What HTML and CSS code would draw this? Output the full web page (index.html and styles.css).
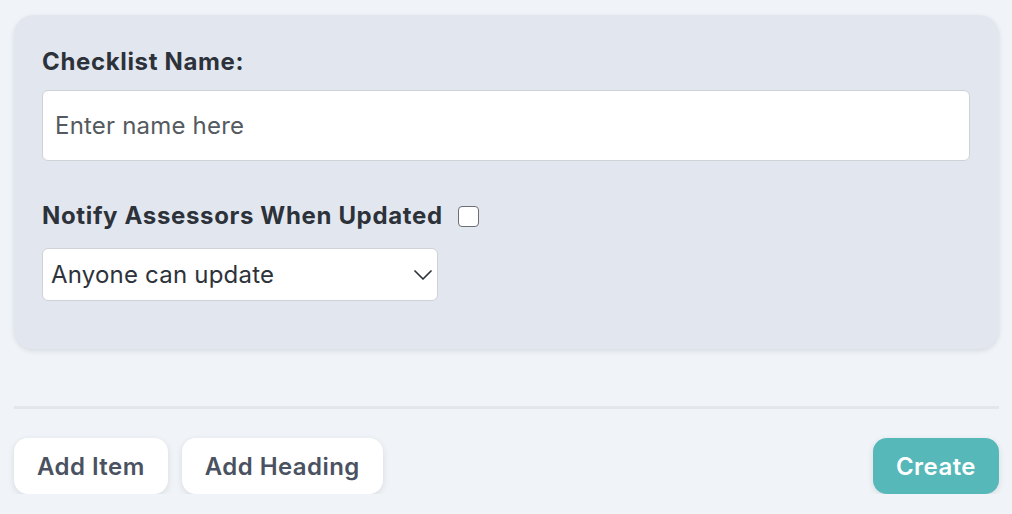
FILE: index.html
```html
<!DOCTYPE html>
<html lang="en">
<head>
<meta charset="utf-8">
<title>Create Checklist</title>
<link rel="stylesheet" href="styles.css">
</head>
<body>
<main class="page">
  <section class="panel">
    <label class="field-label" for="name">Checklist Name:</label>
    <input id="name" class="text-input" type="text" placeholder="Enter name here">
    <div class="notify-row">
      <label class="field-label" for="notify">Notify Assessors When Updated</label>
      <input id="notify" class="checkbox" type="checkbox">
    </div>
    <div class="select-wrap">
      <select class="select">
        <option>Anyone can update</option>
      </select>
      <svg class="chevron" width="18" height="10" viewBox="0 0 18 10" aria-hidden="true"><path d="M1 1l8 8 8-8" fill="none" stroke="#2d333b" stroke-width="1.7" stroke-linecap="round" stroke-linejoin="round"/></svg>
    </div>
  </section>
  <hr class="divider">
  <div class="actions">
    <div class="actions-left">
      <button class="btn">Add Item</button>
      <button class="btn">Add Heading</button>
    </div>
    <button class="btn btn-primary">Create</button>
  </div>
</main>
</body>
</html>
```

FILE: styles.css
```css
* { box-sizing: border-box; }
html, body { margin: 0; padding: 0; }
body {
  background: #f0f4f8;
  font-family: Inter, "Noto Sans", "Liberation Sans", sans-serif;
  color: #2d333b;
}
.page {
  padding: 15px 13px 0 14px;
  display: flex;
  flex-direction: column;
}
.panel {
  background: #e2e7ef;
  border-radius: 20px;
  padding: 29px 29px 48px 28px;
  display: flex;
  flex-direction: column;
  align-items: flex-start;
  box-shadow: 0 2px 5px rgba(30, 40, 60, 0.12);
}
.field-label {
  font-size: 24px;
  line-height: 36px;
  font-weight: 700;
  letter-spacing: 0.65px;
  color: #2d323a;
}
.text-input {
  margin-top: 10px;
  width: 100%;
  height: 71px;
  border: 1px solid #cfd2d6;
  border-radius: 6px;
  background: #fff;
  padding: 0 12px;
  font-family: inherit;
  font-size: 24px;
  letter-spacing: 0.2px;
  color: #2d333b;
  outline: none;
}
.text-input::placeholder { color: #555a60; }
.notify-row {
  margin-top: 37px;
  display: flex;
  align-items: center;
  gap: 15px;
}
.checkbox {
  appearance: none;
  -webkit-appearance: none;
  margin: 0;
  width: 21px;
  height: 21px;
  border: 1.5px solid #6b6f75;
  border-radius: 4px;
  background: #fff;
}
.select-wrap {
  position: relative;
  margin-top: 14px;
  width: 396px;
}
.select {
  appearance: none;
  -webkit-appearance: none;
  width: 100%;
  height: 53px;
  border: 1px solid #cfd2d6;
  border-radius: 6px;
  background: #fff;
  padding: 0 40px 0 8px;
  font-family: inherit;
  font-size: 24px;
  letter-spacing: 0.2px;
  color: #2d333b;
}
.chevron {
  position: absolute;
  right: 6px;
  top: 22px;
  pointer-events: none;
}
.divider {
  margin: 57px 0 0;
  border: 0;
  height: 3px;
  background: #e3e7ec;
}
.actions {
  margin-top: 29px;
  display: flex;
  justify-content: space-between;
  align-items: center;
}
.actions-left {
  display: flex;
  gap: 14px;
}
.btn {
  height: 56px;
  padding: 0 23px;
  border: 0;
  border-radius: 14px;
  background: #fff;
  font-family: inherit;
  font-size: 24px;
  font-weight: 600;
  letter-spacing: 0.45px;
  color: #4a5261;
  box-shadow: 0 2px 6px rgba(30, 40, 60, 0.12);
}
.btn-primary {
  background: #56b8b9;
  color: #fff;
}
```
